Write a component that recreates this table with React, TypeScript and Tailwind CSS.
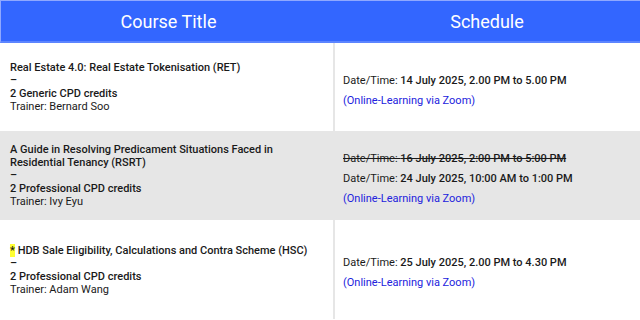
const rows = [
  {
    title: ['Real Estate 4.0: Real Estate Tokenisation (RET)'],
    credits: '2 Generic CPD credits',
    trainer: 'Trainer: Bernard Soo',
    old: null as null | string,
    date: '14 July 2025, 2.00 PM to 5.00 PM',
    bg: 'bg-white',
    h: 'h-[88px]',
    star: false,
  },
  {
    title: ['A Guide in Resolving Predicament Situations Faced in', 'Residential Tenancy (RSRT)'],
    credits: '2 Professional CPD credits',
    trainer: 'Trainer: Ivy Eyu',
    old: '16 July 2025, 2:00 PM to 5:00 PM',
    date: '24 July 2025, 10:00 AM to 1:00 PM',
    bg: 'bg-[#e6e6e6]',
    h: 'h-[89px]',
    star: false,
  },
  {
    title: ['HDB Sale Eligibility, Calculations and Contra Scheme (HSC)'],
    credits: '2 Professional CPD credits',
    trainer: 'Trainer: Adam Wang',
    old: null,
    date: '25 July 2025, 2.00 PM to 4.30 PM',
    bg: 'bg-white',
    h: 'h-[99px]',
    star: true,
  },
];

export default function App() {
  return (
    <div className="w-[640px] h-[320px] overflow-hidden bg-white font-['Roboto',sans-serif] text-[#1a1a1a]">
      {/* Header */}
      <div className="grid grid-cols-[333px_1fr] h-[43px] bg-[#3366ff] border-t border-l border-[#8fa8ff] border-b-2 border-b-[#5c85ff] text-white text-[18px]">
        <div className="flex items-center justify-center pl-[2px]">Course Title</div>
        <div className="flex items-center justify-center">Schedule</div>
      </div>

      {rows.map((r, i) => (
        <div key={i} className={`grid grid-cols-[333px_1fr] ${r.h} ${r.bg}`}>
          <div className="flex flex-col justify-center pl-[10px] text-[11px] leading-[13px]">
            {r.title.map((t, j) => (
              <div key={j} className="font-medium">
                {r.star && j === 0 && <span className="bg-[#ffff33]">*</span>}
                {r.star && j === 0 ? ' ' : ''}
                {t}
              </div>
            ))}
            <div className="font-medium">–</div>
            <div className="font-medium">{r.credits}</div>
            <div>{r.trainer}</div>
          </div>
          <div className="flex flex-col justify-center gap-[7px] border-l-2 border-[#e6e6e6] pl-[8px] pt-[6px] text-[11px] leading-[13px]">
            {r.old && (
              <div className="line-through">
                Date/Time: <span className="font-medium">{r.old}</span>
              </div>
            )}
            <div>
              Date/Time: <span className="font-medium">{r.date}</span>
            </div>
            <div className="text-[#2222dd]">(Online-Learning via Zoom)</div>
          </div>
        </div>
      ))}
    </div>
  );
}
